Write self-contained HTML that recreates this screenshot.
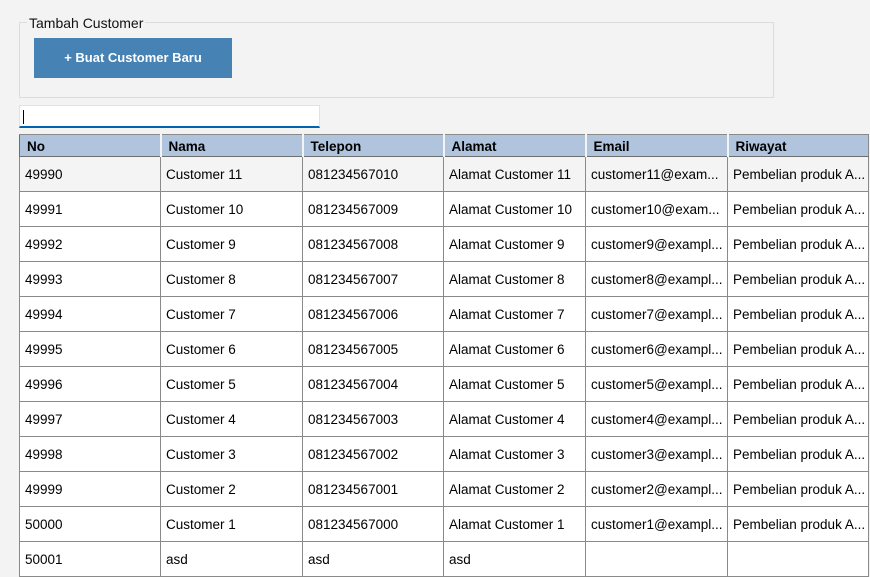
<!DOCTYPE html>
<html><head><style>
body{margin:0;width:870px;height:574px;background:#f3f3f3;font-family:"Liberation Sans",sans-serif;font-size:13.5px;color:#000;overflow:hidden;position:relative}
.fs{position:absolute;left:19px;top:22px;width:753px;height:74px;border:1px solid #dcdcdc}
.lg{position:absolute;left:27px;top:15px;background:#f3f3f3;padding:0 2px;font-size:14px;color:#111}
.btn{position:absolute;left:34px;top:38px;width:198px;height:40px;background:#4682b4;color:#fff;font-weight:bold;font-size:13px;line-height:40px;text-align:center}
.tb{position:absolute;left:19px;top:105px;width:299px;height:20px;background:#fff;border:1px solid #e2e2e2;border-bottom:2px solid #0063b1;box-sizing:content-box}
.tb:after{content:"";position:absolute;left:3px;top:4px;width:1px;height:14px;background:#000}
table{position:absolute;left:19px;top:134px;border-collapse:collapse;table-layout:fixed;border:1px solid #6e6e6e}
td,th{border:1px solid #8a8a8a;padding:1px 0 0 5px;white-space:nowrap;overflow:hidden;text-align:left;height:33px}
th{background:#b0c4de;height:20px;font-weight:bold;padding-left:7px;border-left:2px solid #f4f4f4;border-bottom:1px solid #6e6e6e}
th:first-child{border-left:1px solid #6e6e6e}
tr.g td{background:#f4f4f4}
td{background:#fff}
</style></head><body>
<div class="fs"></div><div class="lg">Tambah Customer</div>
<div class="btn">+ Buat Customer Baru</div>
<div class="tb"></div>
<table>
<colgroup><col style="width:141px"><col style="width:142px"><col style="width:141px"><col style="width:142px"><col style="width:142px"><col style="width:141px"></colgroup>
<tr><th>No</th><th>Nama</th><th>Telepon</th><th>Alamat</th><th>Email</th><th>Riwayat</th></tr>
<tr class="g"><td>49990</td><td>Customer 11</td><td>081234567010</td><td>Alamat Customer 11</td><td>customer11@exam...</td><td>Pembelian produk A...</td></tr>
<tr><td>49991</td><td>Customer 10</td><td>081234567009</td><td>Alamat Customer 10</td><td>customer10@exam...</td><td>Pembelian produk A...</td></tr>
<tr><td>49992</td><td>Customer 9</td><td>081234567008</td><td>Alamat Customer 9</td><td>customer9@exampl...</td><td>Pembelian produk A...</td></tr>
<tr><td>49993</td><td>Customer 8</td><td>081234567007</td><td>Alamat Customer 8</td><td>customer8@exampl...</td><td>Pembelian produk A...</td></tr>
<tr><td>49994</td><td>Customer 7</td><td>081234567006</td><td>Alamat Customer 7</td><td>customer7@exampl...</td><td>Pembelian produk A...</td></tr>
<tr><td>49995</td><td>Customer 6</td><td>081234567005</td><td>Alamat Customer 6</td><td>customer6@exampl...</td><td>Pembelian produk A...</td></tr>
<tr><td>49996</td><td>Customer 5</td><td>081234567004</td><td>Alamat Customer 5</td><td>customer5@exampl...</td><td>Pembelian produk A...</td></tr>
<tr><td>49997</td><td>Customer 4</td><td>081234567003</td><td>Alamat Customer 4</td><td>customer4@exampl...</td><td>Pembelian produk A...</td></tr>
<tr><td>49998</td><td>Customer 3</td><td>081234567002</td><td>Alamat Customer 3</td><td>customer3@exampl...</td><td>Pembelian produk A...</td></tr>
<tr><td>49999</td><td>Customer 2</td><td>081234567001</td><td>Alamat Customer 2</td><td>customer2@exampl...</td><td>Pembelian produk A...</td></tr>
<tr><td>50000</td><td>Customer 1</td><td>081234567000</td><td>Alamat Customer 1</td><td>customer1@exampl...</td><td>Pembelian produk A...</td></tr>
<tr><td>50001</td><td>asd</td><td>asd</td><td>asd</td><td></td><td></td></tr>
</table>
</body></html>
